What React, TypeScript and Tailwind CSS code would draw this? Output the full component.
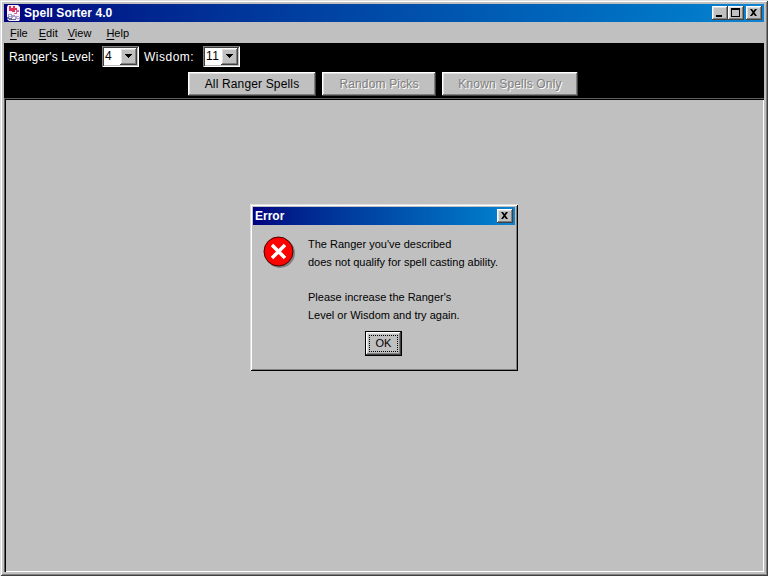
const raised =
  "bg-[#c0c0c0] shadow-[inset_-1px_-1px_0_#404040,inset_1px_1px_0_#ffffff,inset_-2px_-2px_0_#808080,inset_2px_2px_0_#dfdfdf]";

function AppIcon() {
  return (
    <svg width="16" height="16" viewBox="0 0 16 16" className="shrink-0">
      <path d="M2 0h10l2 2v12l-1 2H3l-2-2V2z" fill="#f8f0f4" />
      <path d="M3 1h2v2h2V1h2v2h2v2H9v2H6V6H3z" fill="#e03060" />
      <path d="M10 5h3v2h-2v2H8V8h2z" fill="#d060a0" />
      <path d="M2 9h4v1h3v1h4v1h1v2H9v-1H5v-1H2z" fill="#a8a0c8" />
      <path d="M3 10h2v1H3zM7 12h2v1H7zM11 12h2v1h-2z" fill="#ffffff" />
      <path d="M1 12h2v1h3v1h4v1H3v-1H1z" fill="#606898" />
    </svg>
  );
}

function CaptionButton({ kind }: { kind: "min" | "max" | "close" }) {
  return (
    <div className={`flex h-[14px] w-[16px] items-center justify-center ${raised}`}>
      <svg width="10" height="10" viewBox="0 0 10 10">
        {kind === "min" && <rect x="1" y="7" width="6" height="2" fill="#000" />}
        {kind === "max" && <path d="M0 0h9v9H0zM1 2v6h7V2z" fill="#000" fillRule="evenodd" />}
        {kind === "close" && (
          <path d="M1 1h2l1.500 2L6 1h2L5.500 4.500 8 8H6L4.500 6 3 8H1l2.500-3.500z" fill="#000" />
        )}
      </svg>
    </div>
  );
}

function Combo({ value }: { value: string }) {
  return (
    <div className="flex h-[21px] w-[37px] items-stretch bg-white p-[2px] shadow-[inset_1px_1px_0_#808080,inset_-1px_-1px_0_#ffffff,inset_2px_2px_0_#404040,inset_-2px_-2px_0_#c0c0c0]">
      <span className="flex-1 pl-[1px] text-[12px] leading-[17px] tracking-[0.5px] text-black">{value}</span>
      <div className={`flex h-[17px] w-[17px] items-center justify-center ${raised}`}>
        <svg width="9" height="5" viewBox="0 0 9 5">
          <path d="M1 0h7v1H7v1H6v1H5v1H4V3H3V2H2V1H1z" fill="#000" />
        </svg>
      </div>
    </div>
  );
}

function ToolButton({ label, width, disabled }: { label: string; width: string; disabled?: boolean }) {
  return (
    <div
      className={`flex h-[24px] items-center justify-center text-[12px] tracking-[0.15px] ${width} ${raised} ${
        disabled ? "text-[#808080] [text-shadow:1px_1px_0_#ffffff]" : "text-black"
      }`}
    >
      {label}
    </div>
  );
}

function Menu({ label, className }: { label: string; className?: string }) {
  return (
    <span className={className}>
      <span className="underline underline-offset-2">{label[0]}</span>
      {label.slice(1)}
    </span>
  );
}

export default function App() {
  return (
    <div className="relative h-[576px] w-[768px] overflow-hidden bg-[#c0c0c0] font-['Liberation_Sans',sans-serif] shadow-[inset_1px_1px_0_#dfdfdf,inset_-1px_-1px_0_#404040,inset_2px_2px_0_#ffffff,inset_-2px_-2px_0_#808080]">
      <div className="flex h-full flex-col p-[4px]">
        {/* title bar */}
        <div className="flex h-[18px] items-center bg-gradient-to-r from-[#000080] to-[#1084d0] pl-[2px] pr-[2px]">
          <AppIcon />
          <span className="ml-[2px] text-[12px] font-bold tracking-[0.06px] text-white">Spell Sorter 4.0</span>
          <div className="ml-auto flex items-center">
            <CaptionButton kind="min" />
            <CaptionButton kind="max" />
            <div className="ml-[2px]">
              <CaptionButton kind="close" />
            </div>
          </div>
        </div>

        {/* menu bar */}
        <div className="flex h-[21px] items-center pl-[6px] pt-[1px] text-[11px] text-black">
          <Menu label="File" />
          <Menu label="Edit" className="ml-[11px]" />
          <Menu label="View" className="ml-[10px]" />
          <Menu label="Help" className="ml-[15px]" />
        </div>

        {/* controls */}
        <div className="flex h-[55px] flex-col bg-black">
          <div className="flex h-[29px] items-center pb-[2px] pl-[5px] text-[12px] text-white">
            <span className="w-[93px] tracking-[0.15px]">Ranger's Level:</span>
            <Combo value="4" />
            <span className="ml-[5px] w-[59px] tracking-[0.5px]">Wisdom:</span>
            <Combo value="11" />
          </div>
          <div className="flex justify-center gap-[6px] pr-[2px]">
            <ToolButton label="All Ranger Spells" width="w-[128px]" />
            <ToolButton label="Random Picks" width="w-[114px]" disabled />
            <ToolButton label="Known Spells Only" width="w-[136px]" disabled />
          </div>
        </div>

        {/* desktop pane */}
        <div className="flex-1 border-t border-l border-[#606060] bg-[#c0c0c0] shadow-[inset_1px_1px_0_#000000,inset_-1px_-1px_0_#ffffff]" />
      </div>

      {/* error dialog */}
      <div className="absolute left-[250px] top-[204px] flex h-[167px] w-[268px] flex-col bg-[#c0c0c0] p-[3px] shadow-[inset_1px_1px_0_#dfdfdf,inset_-1px_-1px_0_#000000,inset_2px_2px_0_#ffffff,inset_-2px_-2px_0_#808080]">
        <div className="flex h-[18px] items-center bg-gradient-to-r from-[#000080] to-[#1084d0] pl-[2px] pr-[2px]">
          <span className="text-[12px] font-bold text-white">Error</span>
          <div className="ml-auto">
            <CaptionButton kind="close" />
          </div>
        </div>
        <div className="flex pl-[10px] pt-[11px]">
          <svg width="33" height="33" viewBox="0 0 33 33" className="shrink-0">
            <circle cx="17" cy="17" r="15" fill="#808080" />
            <circle cx="15.500" cy="15.500" r="14.500" fill="#ff0000" stroke="#400000" strokeWidth="1" />
            <path d="M9 9l13 13M22 9L9 22" stroke="#fff" strokeWidth="3.500" />
          </svg>
          <div className="ml-[12px] text-[11px] leading-[17.700px] text-black">
            <p>The Ranger you've described</p>
            <p>does not qualify for spell casting ability.</p>
            <p className="h-[17.700px]"></p>
            <p>Please increase the Ranger's</p>
            <p>Level or Wisdom and try again.</p>
          </div>
        </div>
        <div className="mt-[6px] flex justify-center pr-[1px]">
          <div className="bg-black p-px">
            <div className={`flex h-[23px] w-[35px] items-center justify-center p-[3px] text-[11px] text-black ${raised}`}>
              <span className="flex h-full w-full items-center justify-center border border-dotted border-black">OK</span>
            </div>
          </div>
        </div>
      </div>
    </div>
  );
}
